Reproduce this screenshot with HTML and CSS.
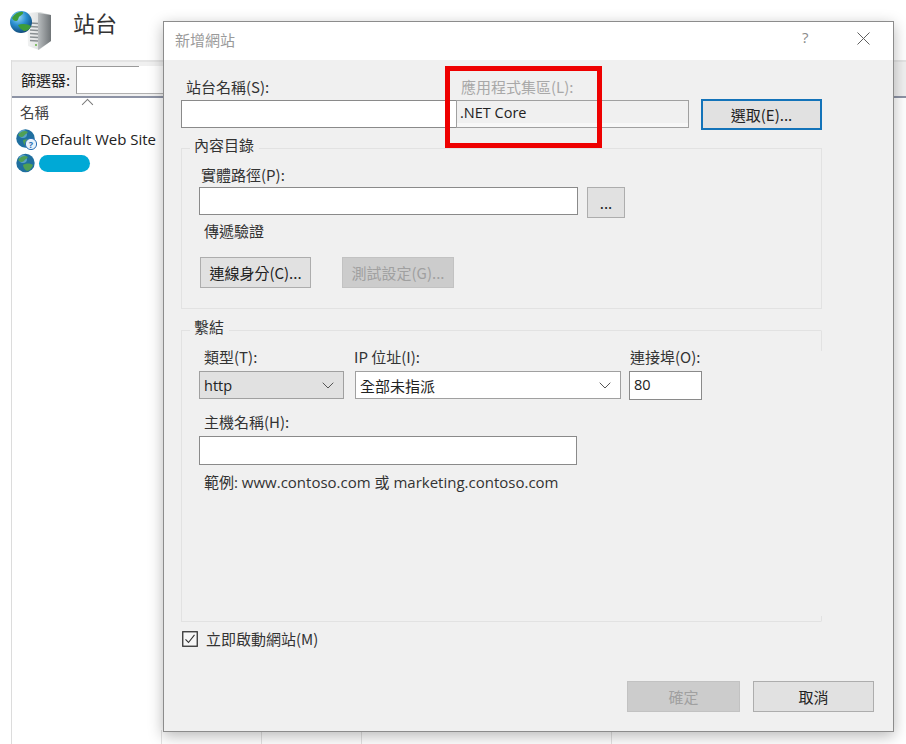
FILE: index.html
```html
<!DOCTYPE html>
<html lang="zh-Hant">
<head>
<meta charset="utf-8">
<title>新增網站</title>
<link rel="stylesheet" href="styles.css">
</head>
<body>
<div class="app">
  <header class="page-head">
    <svg class="server-icon" viewBox="0 0 44 44" aria-hidden="true">
      <defs>
        <linearGradient id="srv" x1="0" x2="1"><stop offset="0" stop-color="#b9bdbf"/><stop offset="1" stop-color="#6f7477"/></linearGradient>
        <linearGradient id="srvf" x1="0" x2="1"><stop offset="0" stop-color="#f2f3f3"/><stop offset="1" stop-color="#cdd1d2"/></linearGradient>
        <radialGradient id="glb" cx=".38" cy=".28" r=".82"><stop offset="0" stop-color="#9ad8f6"/><stop offset=".45" stop-color="#2a8fd0"/><stop offset="1" stop-color="#0b3a66"/></radialGradient>
      </defs>
      <path d="M18 5 L31 4 L42 7 V33 L30 42 L19 38Z" fill="url(#srvf)"/>
      <path d="M29 5 L42 7 V33 L29 42Z" fill="url(#srv)"/>
      <path d="M21 15l8 .5M21 18.500l8 .5M21 22l8 .5M21 25.500l8 .5M21 29l8 .5M21 32.500l8 .5" stroke="#8a9093" stroke-width="1.300"/>
      <circle cx="27" cy="37" r="1" fill="#63b33f"/>
      <circle cx="12" cy="14" r="11" fill="url(#glb)"/>
      <path d="M3 10c3-5 8-7 11-6 1 2-2 3-4 5-1 2-1 4-3 4-2 0-3-1-4-3ZM9 17c4-2 10-1 13 1-1 3-4 5-7 5-2-1-5-3-6-6Z" fill="#3d9c3a"/>
    </svg>
    <h1 class="page-title">站台</h1>
  </header>
  <div class="panel">
    <div class="filter-bar">
      <span class="filter-label">篩選器:</span>
      <span class="filter-input"></span>
    </div>
    <div class="list">
      <div class="list-head">名稱<span class="sort-caret"></span></div>
      <div class="site-row">
        <svg class="globe" viewBox="0 0 21 21" aria-hidden="true">
          <circle cx="9.500" cy="9.500" r="9.200" fill="#1f6f9f"/>
          <circle cx="7" cy="5" r="4" fill="#6fb6dc" opacity=".7"/>
          <path d="M2 6c3-4 7-5 10-3-1 2-3 2-4 4-2 2-4 1-6-1ZM7 11c3-1 5-1 7 1-1 3-3 5-4 5-2-1-3-4-3-6Z" fill="#4f9f55"/>
          <circle cx="15" cy="15" r="5.600" fill="#e8f1fa" stroke="#2a6fb5"/>
          <text class="help-mark" x="15" y="18.500" text-anchor="middle">?</text>
        </svg>
        <span>Default Web Site</span>
      </div>
      <div class="site-row">
        <svg class="globe" viewBox="0 0 21 21" aria-hidden="true">
          <circle cx="9.500" cy="10" r="9.200" fill="#1f6f9f"/>
          <circle cx="7" cy="6" r="4" fill="#6fb6dc" opacity=".7"/>
          <path d="M2 7c3-4 7-5 10-3-1 2-3 2-4 4-2 2-4 1-6-1ZM7 12c3-2 7-2 10 0-1 3-4 6-6 6-2-1-4-4-4-6Z" fill="#4f9f55"/>
        </svg>
        <span class="redacted"></span>
      </div>
    </div>
    <div class="col-lines"><i></i><i></i><i></i><i></i></div>
  </div>
</div>

<section class="dialog">
  <div class="titlebar">
    <span class="dialog-title">新增網站</span>
    <span class="help-btn">?</span>
    <svg class="close-btn" viewBox="0 0 13 13" aria-hidden="true"><path d="M.5.5l12 12M12.500.5l-12 12" stroke="#5f5f5f" fill="none"/></svg>
  </div>
  <div class="body">
    <div class="top-row">
      <div class="name-col">
        <label class="lbl">站台名稱(S):</label>
        <div class="field name-field"></div>
      </div>
      <div class="pool-col">
        <label class="lbl disabled">應用程式集區(L):</label>
        <div class="field pool-field">.NET Core</div>
      </div>
      <button class="btn focus-btn">選取(E)...</button>
    </div>

    <div class="group content-group">
      <span class="legend">內容目錄</span>
      <label class="lbl path-lbl">實體路徑(P):</label>
      <div class="path-row">
        <div class="field path-field"></div>
        <button class="btn dots-btn">...</button>
      </div>
      <div class="lbl auth-lbl">傳遞驗證</div>
      <div class="auth-row">
        <button class="btn conn-btn">連線身分(C)...</button>
        <button class="btn test-btn" disabled>測試設定(G)...</button>
      </div>
    </div>

    <div class="group bind-group">
      <span class="legend">繫結</span>
      <div class="bind-row">
        <div class="type-col">
          <label class="lbl">類型(T):</label>
          <div class="select type-select">http<svg class="chev" viewBox="0 0 12 7"><path d="M.7.7 6 6l5.300-5.300" fill="none" stroke="#555"/></svg></div>
        </div>
        <div class="ip-col">
          <label class="lbl">IP 位址(I):</label>
          <div class="select ip-select">全部未指派<svg class="chev" viewBox="0 0 12 7"><path d="M.7.7 6 6l5.300-5.300" fill="none" stroke="#555"/></svg></div>
        </div>
        <div class="port-col">
          <label class="lbl">連接埠(O):</label>
          <div class="field port-field">80</div>
        </div>
      </div>
      <label class="lbl host-lbl">主機名稱(H):</label>
      <div class="field host-field"></div>
      <div class="lbl example">範例: www.contoso.com 或 marketing.contoso.com</div>
    </div>

    <div class="check-row">
      <svg class="check" viewBox="0 0 16 16" aria-hidden="true"><rect x=".75" y=".75" width="14.500" height="14.500" fill="#f7f7f7" stroke="#333" stroke-width="1.300"/><path d="M3.500 8.300 6.500 11.500 12.500 3.800" fill="none" stroke="#333" stroke-width="1.100"/></svg>
      <span class="lbl">立即啟動網站(M)</span>
    </div>

    <div class="actions">
      <button class="btn ok-btn" disabled>確定</button>
      <button class="btn cancel-btn">取消</button>
    </div>
  </div>
  <div class="highlight"></div>
</section>
</body>
</html>
```
FILE: styles.css
```css
* { box-sizing: border-box; }
html, body { margin: 0; height: 100%; }
body {
  width: 906px; height: 744px; overflow: hidden; background: #fff; position: relative;
  font-family: "Open Sans", "Noto Sans CJK TC", sans-serif; font-size: 15px; color: #262626;
}
.app { height: 744px; display: flex; flex-direction: column; }
.page-head { height: 60px; display: flex; align-items: flex-start; padding: 8px 0 0 9px; }
.server-icon { width: 44px; height: 44px; flex: none; }
.page-title { margin: -1px 0 0 20px; font: 400 22px/30px "Noto Sans CJK TC", sans-serif; color: #333; }
.panel { margin-left: 11px; flex: 1; border-left: 1px solid #dcdcdc; display: flex; flex-direction: column; }
.filter-bar { height: 38px; background: #f0f0f0; border-top: 2px solid #e4e4e4; border-bottom: 2px solid #8d93a5; display: flex; align-items: center; padding-left: 9px; }
.filter-label { font-family: "Noto Sans CJK TC", sans-serif; font-size: 15px; color: #222; width: 55px; flex: none; }
.filter-input { width: 87px; height: 28px; margin-top: 1px; background: #fff; border-left: 1px solid #9a9a9a; border-bottom: 1px solid #b0b0b0; position: relative; }
.filter-input::before { content: ""; position: absolute; left: 0; top: 0; width: 62px; height: 1px; background: #9a9a9a; }
.list { flex: 1; position: relative; }
.list-head { height: 29px; padding: 4px 0 0 8px; font-family: "Noto Sans CJK TC", sans-serif; font-size: 14.500px; line-height: 20px; color: #444; position: relative; }
.sort-caret { position: absolute; left: 71px; top: 2px; width: 9px; height: 9px; border: solid #777; border-width: 1px 0 0 1px; transform: rotate(45deg) scale(.9); }
.site-row { height: 24px; display: flex; align-items: center; padding-left: 4px; gap: 3px; color: #222; font-size: 15px; }
.globe { width: 21px; height: 21px; flex: none; }
.help-mark { font: 700 9px "Open Sans", sans-serif; fill: #2a6fb5; }
.redacted { width: 51px; height: 17px; border-radius: 9px; background: #00a9d6; margin-left: -1px; }
.col-lines { height: 14px; display: flex; }
.col-lines i { border-right: 1px solid #e2e2e2; width: 100px; }
.col-lines i:first-child { width: 150px; }
.col-lines i:nth-child(4) { width: 250px; }

.dialog { position: absolute; left: 163px; top: 21px; width: 731px; height: 711px; background: #f0f0f0; border: 1px solid #8c8c8c; box-shadow: 0 4px 14px rgba(0,0,0,.28); }
.titlebar { height: 38px; background: #fff; position: relative; display: flex; align-items: center; padding: 0 0 3px 11px; }
.dialog-title { color: #9a9a9a; font: 15px "Noto Sans CJK TC", sans-serif; }
.help-btn { position: absolute; left: 638px; top: 5px; font-size: 15px; color: #8a8a8a; }
.close-btn { position: absolute; left: 693px; top: 10px; width: 13px; height: 13px; }
.body { padding: 0 0 0 17px; position: relative; height: 671px; display: flex; flex-direction: column; }
.lbl { display: block; font-family: "Noto Sans CJK TC", "Open Sans", sans-serif; font-size: 15px; line-height: 20px; color: #333; }
.lbl.disabled { color: #a8a8a8; }
.field { background: #fff; border: 1px solid #8a8a8a; height: 28px; font-size: 14.500px; line-height: 26px; padding-left: 4px; color: #222; }
.top-row { display: flex; padding-top: 17px; align-items: flex-end; }
.name-col { width: 275px; }
.name-col .lbl { margin: 0 0 3px 5px; }
.name-field { width: 290px; }
.pool-col { width: 245px; }
.pool-col .lbl { margin: 0 0 3px 5px; }
.pool-field { width: 233px; background: #f0f0f0; padding-left: 3px; border-color: #a0a0a0; box-shadow: inset 0 -4px 0 #f7f7f7; line-height: 24px; }
.btn { font-family: "Noto Sans CJK TC", sans-serif; font-size: 15px; color: #222; background: #e1e1e1; border: 1px solid #adadad; padding: 0; }
.btn:disabled { background: #ccc; color: #a0a0a0; border-color: #c2c2c2; }
.focus-btn { width: 121px; height: 31px; border: 2px solid #1373b9; margin-bottom: -2px; }
.group { width: 641px; position: relative; border: 1px solid #e2e2e2; margin-left: 0; }
.legend { position: absolute; top: -14px; left: 8px; padding: 0 5px 0 4px; font-family: "Noto Sans CJK TC", sans-serif; font-size: 15px; line-height: 20px; color: #333; }
.legend { background: linear-gradient(transparent 13px, #f0f0f0 13px, #f0f0f0 15px, transparent 15px); }
.content-group { margin-top: 20px; height: 161px; padding: 16px 0 0 17px; }
.path-row { display: flex; gap: 9px; align-items: flex-start; margin-top: 2px; }
.path-lbl { margin-left: 2px; }
.path-field { width: 379px; }
.dots-btn { width: 38px; height: 31px; }
.auth-lbl { margin: 3px 0 0 5px; }
.auth-row { display: flex; gap: 31px; margin-top: 16px; margin-left: 1px; }
.conn-btn { width: 111px; height: 31px; }
.test-btn { width: 112px; height: 31px; }
.bind-group { margin-top: 21px; height: 292px; padding: 16px 0 0 17px; border-right-color: transparent; }
.bind-group::before, .bind-group::after { content: ""; position: absolute; right: -1px; width: 1px; background: #e2e2e2; }
.bind-group::before { top: 0; height: 20px; }
.bind-group::after { bottom: 0; height: 5px; }
.bind-row { display: flex; }
.bind-row .lbl { margin-bottom: 4px; }
.type-col { width: 156px; }
.ip-col { width: 274px; }
.type-col .lbl { margin-left: 5px; }
.ip-col .lbl { margin-left: -1px; }
.select { height: 28px; border: 1px solid #a0a0a0; display: flex; align-items: center; justify-content: space-between; padding: 0 9px 0 4px; font-size: 14.500px; color: #222; }
.type-select { width: 145px; background: #e1e1e1; }
.ip-select { width: 266px; background: #fff; font-family: "Noto Sans CJK TC", sans-serif; font-size: 15px; }
.chev { width: 12px; height: 7px; flex: none; }
.port-col .lbl { margin-left: 1px; }
.port-field { width: 73px; height: 29px; }
.host-lbl { margin: 12px 0 0 5px; }
.host-field { width: 378px; height: 29px; margin-top: 4px; }
.example { margin: 7px 0 0 5px; font-family: "Open Sans", "Noto Sans CJK TC", sans-serif; }
.check-row { display: flex; align-items: center; gap: 8px; margin: 5px 0 0 1px; height: 24px; }
.check { width: 16px; height: 16px; flex: none; }
.actions { display: flex; gap: 13px; margin: 30px 0 0 446px; }
.ok-btn { width: 113px; height: 31px; }
.cancel-btn { width: 121px; height: 31px; }
.highlight { position: absolute; left: 281px; top: 44px; width: 157px; height: 82px; border: 5px solid #ee0000; pointer-events: none; }
```
